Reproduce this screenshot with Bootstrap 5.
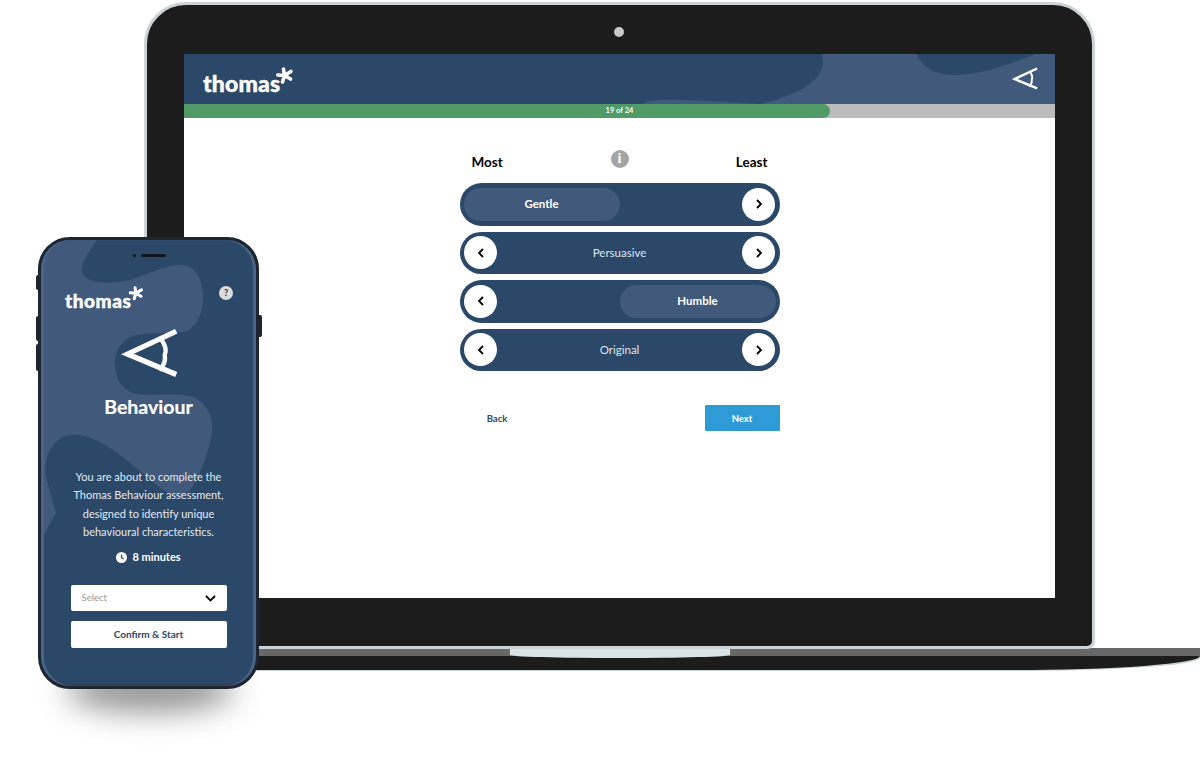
<!DOCTYPE html>
<html lang="en">
<head>
  <meta charset="UTF-8">
  <meta name="viewport" content="width=device-width, initial-scale=1.0">
  <title>Thomas Behaviour assessment</title>
  <link href="https://cdn.jsdelivr.net/npm/bootstrap@5.3.2/dist/css/bootstrap.min.css" rel="stylesheet">
  <style>
    body { background: #fff; font-family: Lato, "Liberation Sans", sans-serif; overflow: hidden; }
    .stage { position: relative; width: 1200px; height: 768px; overflow: hidden; }

    /* laptop */
    .lid { position: absolute; left: 144px; top: 2px; width: 951px; height: 647px; background: #1c1c1c; border: 3px solid #ccd3d6; border-radius: 42px 42px 8px 8px; }
    .camera { position: absolute; left: 467px; top: 22px; width: 10px; height: 10px; border-radius: 50%; background: #c9c9c9; }
    .screen { position: absolute; left: 37px; top: 49px; width: 871px; height: 544px; background: #fff; display: flex; flex-direction: column; }
    .base-shadow { position: absolute; left: 200px; top: 650px; width: 1000px; height: 21px; background: #ccd3d6; border-radius: 0 0 190px 0 / 0 0 13px 0; }
    .base { position: absolute; left: 200px; top: 648px; width: 1000px; height: 22px; background: #1c1c1c; border-radius: 0 0 190px 0 / 0 0 14px 0; overflow: hidden; }
    .base-strip { height: 8px; background: #686868; }
    .notch { position: absolute; left: 310px; top: 0; width: 220px; height: 10px; background: #d9e2e6; border-radius: 0 0 50% 50% / 0 0 3px 3px; }

    .top-bar { position: relative; height: 50px; background: #41597a; overflow: hidden; flex: none; }
    .top-bar svg.blobs { position: absolute; left: 0; top: 0; }
    .logo { display: flex; align-items: flex-start; color: #fff; font-weight: 900; line-height: 1; -webkit-text-stroke: .4px #fff; }
    .logo-desk { position: absolute; left: 19px; top: 18px; font-size: 23px; letter-spacing: .15px; }
    .logo-desk svg { margin-left: -6px; margin-top: -6px; }
    .eye-desk { position: absolute; right: 17px; top: 13px; }

    .track { position: relative; height: 14px; background: #bcbcbc; flex: none; }
    .track .progress-bar { position: absolute; left: 0; top: 0; height: 14px; width: 646px; background: #4f9a66; border-radius: 0 7px 7px 0; }
    .track span { position: absolute; left: 0; right: 0; top: 0; line-height: 14px; text-align: center; color: #fff; font-size: 7.5px; font-weight: 700; }

    .survey { width: 320px; margin: 0 auto; }
    .survey-head { height: 65px; padding: 0 12px; display: flex; justify-content: space-between; align-items: flex-start; font-size: 13.5px; color: #000; position: relative; }
    .survey-head b { margin-top: 35px; line-height: 18px; font-weight: 700; }
    .info-dot { position: absolute; left: 151px; top: 32px; width: 18px; height: 18px; border-radius: 50%; background: #a5a5a5; color: #fff; font: 700 14px/18px "Liberation Serif", serif; text-align: center; }

    .pick-row { position: relative; height: 42.5px; margin-bottom: 6px; background: #2b4868; border-radius: 22px; color: #dfe6ee; font-size: 11.5px; text-align: center; line-height: 41px; }
    .pick-pill { position: absolute; top: 5px; height: 33px; width: 156px; background: #41597a; border-radius: 17px; color: #fff; font-weight: 700; line-height: 32px; }
    .pick-pill.is-left { left: 4px; }
    .pick-pill.is-right { right: 4px; width: 156px; }
    .round-btn { position: absolute; top: 4.5px; width: 33px; height: 33px; border-radius: 50%; background: #fff; display: flex; align-items: center; justify-content: center; }
    .round-btn.is-left { left: 4.5px; }
    .round-btn.is-right { right: 4.5px; }

    .survey-foot { margin-top: 33.5px; display: flex; justify-content: space-between; align-items: center; }
    .btn-back { width: 75px; padding: 3px 0 0; height: 26px; border: 0; background: none; color: #2b4868; font-size: 9.5px; font-weight: 700; }
    .btn-next { width: 75px; padding: 3px 0 0; height: 26px; border: 0; border-radius: 1px; background: #2e9bd6; color: #fff; font-size: 9.5px; font-weight: 700; }

    /* phone */
    .phone { position: absolute; left: 38px; top: 237px; width: 221px; height: 452px; border-radius: 32px; background: #2b4868; border: 3px solid #1d2530; overflow: hidden; display: flex; flex-direction: column; align-items: center; color: #fff; }
    .phone::after { content: ""; position: absolute; inset: 0; border-radius: 29px; box-shadow: inset 3px 0 1px #4a6585, inset -3px 0 1px #4a6585, inset 0 -2px 1px #2f3d50; pointer-events: none; }
    .phone-shadow { position: absolute; left: 66px; top: 668px; width: 168px; height: 44px; border-radius: 50%; background: rgba(40,40,40,.5); filter: blur(15px); }
    .phone-key { position: absolute; width: 4px; background: #1d2530; border-radius: 2px 0 0 2px; left: 36px; }
    .phone-key.is-right { left: 258px; border-radius: 0 2px 2px 0; }
    .phone svg.blobs { position: absolute; left: 0; top: 0; }
    .speaker { position: absolute; left: 92px; top: 14px; display: flex; gap: 5px; align-items: center; }
    .speaker i { display: block; height: 3px; border-radius: 2px; background: #10151c; width: 3px; }
    .speaker i + i { width: 25px; }
    .phone .logo { position: absolute; left: 24px; top: 51px; font-size: 19px; letter-spacing: .55px; }
    .phone .logo svg { margin-left: -4px; margin-top: -6px; }
    .help-dot { position: absolute; left: 178px; top: 46px; width: 14px; height: 14px; border-radius: 50%; background: #dcdcdc; color: #333; font-size: 9px; font-weight: 900; line-height: 14px; text-align: center; }
    .phone-eye { position: relative; margin: 88px 0 0 2px; }
    .phone h2 { position: relative; margin: 14px 0 0; font-size: 19.5px; line-height: 26px; font-weight: 700; -webkit-text-stroke: .2px #fff; }
    .phone p { position: relative; width: 170px; margin: 48px 0 0; font-size: 11px; line-height: 18.3px; text-align: center; color: #e3e9f0; }
    .time-row { position: relative; margin-top: 7px; display: flex; align-items: center; gap: 5px; font-size: 11px; font-weight: 700; line-height: 18px; }
    .select-box { position: relative; width: 156px; height: 26px; margin-top: 19px; padding: 0 11px; background: #fff; border-radius: 2px; color: #9a9a9a; font-size: 9.5px; display: flex; align-items: center; justify-content: space-between; }
    .btn-confirm { position: relative; width: 156px; height: 27px; margin-top: 10px; padding: 0; border: 0; border-radius: 2px; background: #fff; color: #2b4868; font-size: 10px; font-weight: 700; }
  </style>
</head>
<body>
  <div class="stage">
    <div class="base-shadow"></div>
    <div class="base">
      <div class="base-strip"></div>
      <div class="notch"></div>
    </div>
    <div class="lid">
      <div class="camera"></div>
      <div class="screen">
        <div class="top-bar">
          <svg class="blobs" width="871" height="50" viewBox="0 0 871 50">
            <path d="M0 0H638C642 16 635 36 576 50H0Z" fill="#2b4868"/>
            <path d="M459 50C468 44 490 45 576 50Z" fill="#41597a"/>
            <path d="M733 0C738 14 752 21 772 21C802 20 830 8 852 0Z" fill="#2b4868"/>
          </svg>
          <div class="logo logo-desk">thomas<svg width="20" height="22" viewBox="0 0 20 22"><use href="#splat"/></svg></div>
          <svg class="eye-desk" width="26" height="24" viewBox="0 0 26 24"><use href="#eye"/></svg>
        </div>
        <div class="track">
          <div class="progress-bar"></div>
          <span>19 of 24</span>
        </div>
        <div class="survey">
          <div class="survey-head">
            <b>Most</b>
            <div class="info-dot">i</div>
            <b>Least</b>
          </div>
          <div class="pick-row">
            <div class="pick-pill is-left">Gentle</div>
            <div class="round-btn is-right"><svg width="8" height="10" viewBox="0 0 8 10"><use href="#chev-r"/></svg></div>
          </div>
          <div class="pick-row">
            <div class="round-btn is-left"><svg width="8" height="10" viewBox="0 0 8 10"><use href="#chev-l"/></svg></div>
            Persuasive
            <div class="round-btn is-right"><svg width="8" height="10" viewBox="0 0 8 10"><use href="#chev-r"/></svg></div>
          </div>
          <div class="pick-row">
            <div class="round-btn is-left"><svg width="8" height="10" viewBox="0 0 8 10"><use href="#chev-l"/></svg></div>
            <div class="pick-pill is-right">Humble</div>
          </div>
          <div class="pick-row">
            <div class="round-btn is-left"><svg width="8" height="10" viewBox="0 0 8 10"><use href="#chev-l"/></svg></div>
            Original
            <div class="round-btn is-right"><svg width="8" height="10" viewBox="0 0 8 10"><use href="#chev-r"/></svg></div>
          </div>
          <div class="survey-foot">
            <button type="button" class="btn btn-back">Back</button>
            <button type="button" class="btn btn-next">Next</button>
          </div>
        </div>
      </div>
    </div>

    <div class="phone-shadow"></div>
    <div class="phone-key" style="top:275px;height:15px"></div>
    <div class="phone-key" style="top:316px;height:25px"></div>
    <div class="phone-key" style="top:344px;height:27px"></div>
    <div class="phone-key is-right" style="top:315px;height:22px"></div>
    <div class="phone">
      <svg class="blobs" width="215" height="446" viewBox="0 0 215 446">
        <path d="M0 0H56C50 10 39 22 41 32C43 42 60 44 79 42C100 39 120 25 139 25C155 25 162 40 162 57C162 72 157 84 148 90C135 96 105 90 89 97C78 103 73 115 74 124C75 138 79 148 92 153C110 158 145 150 158 160C170 170 172 182 171 192C168 215 152 257 139 257C125 257 100 230 72 210C55 198 35 190 22 197C8 204 2 222 5 237L15 273L0 300Z" fill="#41597a"/>
      </svg>
      <div class="speaker"><i></i><i></i></div>
      <div class="logo">thomas<svg width="17" height="19" viewBox="0 0 20 22"><use href="#splat"/></svg></div>
      <div class="help-dot">?</div>
      <svg class="phone-eye" width="58" height="52" viewBox="0 0 26 24"><use href="#eye"/></svg>
      <h2>Behaviour</h2>
      <p>You are about to complete the Thomas Behaviour assessment, designed to identify unique behavioural characteristics.</p>
      <div class="time-row">
        <svg width="11" height="11" viewBox="0 0 12 12"><circle cx="6" cy="6" r="6" fill="#fff"/><path d="M6 2.6V6.2L8.4 7.6" fill="none" stroke="#2b4868" stroke-width="1.3"/></svg>
        8 minutes
      </div>
      <div class="select-box">Select
        <svg width="11" height="7" viewBox="0 0 11 7"><path d="M1 1L5.5 5.5L10 1" fill="none" stroke="#000" stroke-width="1.8"/></svg>
      </div>
      <button type="button" class="btn btn-confirm">Confirm &amp; Start</button>
    </div>
  </div>

  <svg width="0" height="0" class="position-absolute">
    <defs>
      <g id="splat" fill="none" stroke="#fff" stroke-width="3.6" stroke-linecap="round">
        <path d="M10.5 9.5L9.5 3M10.5 9.5L17 5.5M10.5 9.5L16.5 13M10.5 9.5L8.5 16M10.5 9.5L3.8 9"/>
      </g>
      <g id="eye" fill="none" stroke="#fff" stroke-width="2.4" stroke-linecap="square">
        <path d="M24 2L2.6 12L24 21"/>
        <path d="M18 4.8C20.2 8 20.8 10.5 19.8 12.5C20.2 14.5 19.8 16.5 18 18.8" stroke-width="2"/>
      </g>
      <path id="chev-r" d="M2 1L6 5L2 9" fill="none" stroke="#000" stroke-width="1.8"/>
      <path id="chev-l" d="M6 1L2 5L6 9" fill="none" stroke="#000" stroke-width="1.8"/>
    </defs>
  </svg>
  <script src="https://cdn.jsdelivr.net/npm/bootstrap@5.3.2/dist/js/bootstrap.bundle.min.js"></script>
</body>
</html>
